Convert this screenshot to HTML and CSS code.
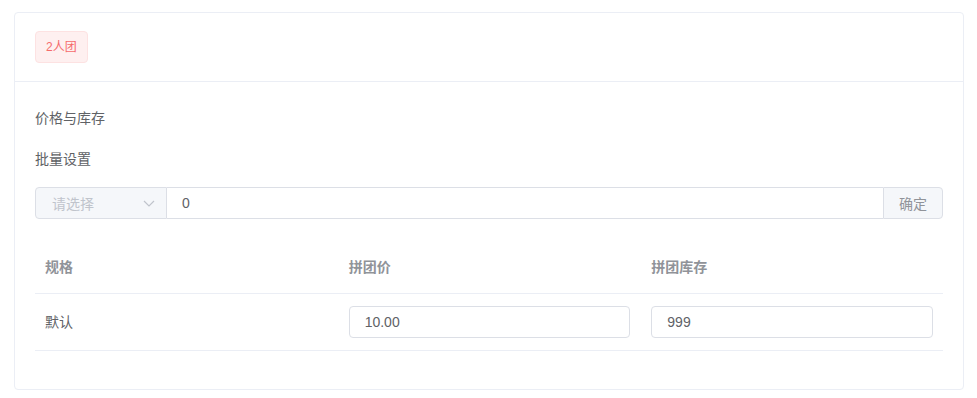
FILE: index.html
```html
<!DOCTYPE html>
<html lang="zh-CN">

<head>
    <meta charset="UTF-8">
    <meta name="viewport" content="width=device-width, initial-scale=1.0">
    <title>拼团设置</title>
    <link rel="stylesheet" href="styles.css">
</head>

<body>
    <div class="page">
        <div class="card">
            <div class="card-header">
                <span class="tag">2人团</span>
            </div>
            <div class="card-body">
                <div class="label">价格与库存</div>
                <div class="label label-batch">批量设置</div>

                <div class="input-group">
                    <div class="select">
                        <span class="placeholder">请选择</span>
                        <svg class="arrow" width="12" height="7" viewBox="0 0 12 7">
                            <path d="M1 1l5 5 5-5" fill="none" stroke="#c0c4cc" stroke-width="1.2" />
                        </svg>
                    </div>
                    <input class="group-input" type="text" value="0">
                    <button class="append">确定</button>
                </div>

                <table class="sku-table">
                    <thead>
                        <tr>
                            <th>规格</th>
                            <th>拼团价</th>
                            <th>拼团库存</th>
                        </tr>
                    </thead>
                    <tbody>
                        <tr>
                            <td>默认</td>
                            <td><input class="cell-input" type="text" value="10.00"></td>
                            <td><input class="cell-input" type="text" value="999"></td>
                        </tr>
                    </tbody>
                </table>
            </div>
        </div>
    </div>
</body>

</html>
```

FILE: styles.css
```css
body {
    font-family: 'Liberation Sans', 'Noto Sans CJK SC', sans-serif;
    font-size: 14px;
    color: #606266;
    background-color: #fff;
    margin: 0;
    padding: 0;
}

.page {
    padding: 12px 13px 9px 14px;
}

.card {
    border: 1px solid #ebeef5;
    border-radius: 4px;
    background-color: #fff;
}

.card-header {
    padding: 18px 20px;
    border-bottom: 1px solid #ebeef5;
    display: flex;
}

.tag {
    display: inline-block;
    height: 32px;
    line-height: 30px;
    padding: 0 10px;
    font-size: 12px;
    color: #f56c6c;
    background-color: #fef0f0;
    border: 1px solid #fde2e2;
    border-radius: 4px;
    box-sizing: border-box;
}

.card-body {
    padding: 20px;
}

.label {
    line-height: 32px;
    color: #606266;
}

.label-batch {
    margin-top: 9px;
    margin-bottom: 12px;
}

.input-group {
    display: flex;
    height: 32px;
}

.select {
    width: 132px;
    flex: none;
    display: flex;
    align-items: center;
    justify-content: space-between;
    padding: 0 11px 0 16px;
    box-sizing: border-box;
    background-color: #f5f7fa;
    border: 1px solid #dcdfe6;
    border-radius: 4px 0 0 4px;
}

.placeholder {
    color: #c0c4cc;
}

.arrow {
    display: block;
}

.group-input {
    flex: 1;
    min-width: 0;
    height: 32px;
    box-sizing: border-box;
    border: 1px solid #dcdfe6;
    border-left: none;
    border-right: none;
    padding: 0 15px;
    font-family: inherit;
    font-size: 14px;
    color: #606266;
    outline: none;
}

.append {
    width: 60px;
    flex: none;
    height: 32px;
    border: 1px solid #dcdfe6;
    border-radius: 0 4px 4px 0;
    background-color: #f5f7fa;
    color: #909399;
    font-family: inherit;
    font-size: 14px;
    padding: 0;
}

.sku-table {
    width: 100%;
    margin-top: 26px;
    margin-bottom: 18px;
    border-collapse: collapse;
    table-layout: fixed;
}

.sku-table th {
    text-align: left;
    font-weight: bold;
    color: #909399;
    padding: 11px 10px 14px 11px;
    line-height: 23px;
    border-bottom: 1px solid #ebeef5;
}

.sku-table td {
    padding: 12px 10px 12px 11px;
    line-height: 32px;
    border-bottom: 1px solid #ebeef5;
    color: #606266;
}

.sku-table th:first-child,
.sku-table td:first-child {
    padding-left: 10px;
}

.cell-input {
    display: block;
    width: 100%;
    height: 32px;
    box-sizing: border-box;
    border: 1px solid #dcdfe6;
    border-radius: 4px;
    padding: 0 15px;
    font-family: inherit;
    font-size: 14px;
    color: #606266;
    outline: none;
}
```
